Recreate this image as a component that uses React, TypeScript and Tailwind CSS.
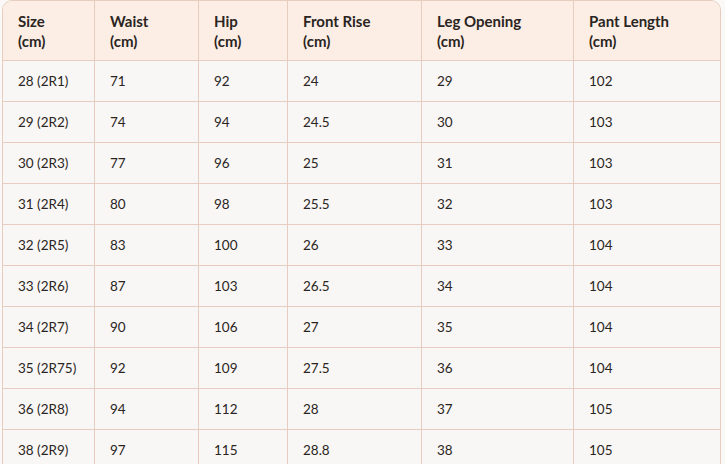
import React from 'react';

const headers = [
    ['Size', '(cm)'],
    ['Waist', '(cm)'],
    ['Hip', '(cm)'],
    ['Front Rise', '(cm)'],
    ['Leg Opening', '(cm)'],
    ['Pant Length', '(cm)'],
];

const rows = [
    ['28 (2R1)', '71', '92', '24', '29', '102'],
    ['29 (2R2)', '74', '94', '24.5', '30', '103'],
    ['30 (2R3)', '77', '96', '25', '31', '103'],
    ['31 (2R4)', '80', '98', '25.5', '32', '103'],
    ['32 (2R5)', '83', '100', '26', '33', '104'],
    ['33 (2R6)', '87', '103', '26.5', '34', '104'],
    ['34 (2R7)', '90', '106', '27', '35', '104'],
    ['35 (2R75)', '92', '109', '27.5', '36', '104'],
    ['36 (2R8)', '94', '112', '28', '37', '105'],
    ['38 (2R9)', '97', '115', '28.8', '38', '105'],
];

const App = () => {
    return (
        <div className="w-[725px] h-[464px] overflow-hidden bg-[#fbf9f7] font-['Lato','Liberation_Sans',sans-serif] text-[#2a2522]">
            <div className="ml-[2px] w-[719px] border border-[#e6cdbf] rounded-t-[10px] overflow-hidden">
                <div className="grid grid-cols-[92px_104px_89px_134px_152px_146px]">
                    {headers.map((h, i) => (
                        <div
                            key={i}
                            className={`h-[60px] bg-[#fdeee5] border-b border-[#e6cdbf] pl-[15px] flex flex-col justify-center text-[15px] font-bold leading-[20px] ${i < 5 ? 'border-r' : ''}`}
                        >
                            <span>{h[0]}</span>
                            <span>{h[1]}</span>
                        </div>
                    ))}
                    {rows.map((r, ri) =>
                        r.map((c, ci) => (
                            <div
                                key={ri + '-' + ci}
                                className={`h-[41px] bg-[#f9f7f5] border-b border-[#e6cdbf] pl-[15px] flex items-center text-[13.5px] ${ci < 5 ? 'border-r' : ''}`}
                            >
                                {c}
                            </div>
                        ))
                    )}
                </div>
            </div>
        </div>
    );
};

export default App;
